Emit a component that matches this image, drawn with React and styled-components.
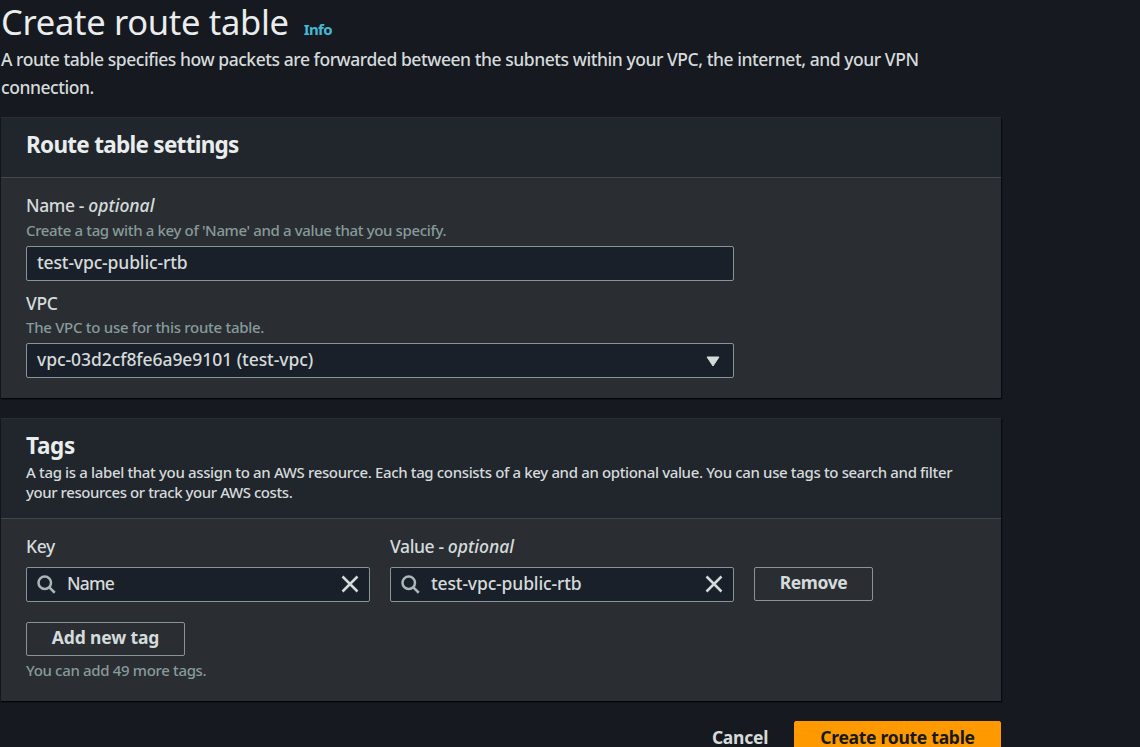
import React from "react";
import styled, { createGlobalStyle, ThemeProvider } from "styled-components";

const theme = {
  page: "#16191f",
  header: "#21252c",
  panel: "#2a2e33",
  field: "#1a2029",
  line: "#879596",
  divider: "#414750",
  text: "#d5dbdb",
  heading: "#eaeded",
  muted: "#879a9a",
  link: "#44b9d6",
  primary: "#ff9900",
};

const GlobalStyle = createGlobalStyle`
  * { box-sizing: border-box; }
  body {
    margin: 0;
    overflow: hidden;
    background: ${theme.page};
    color: ${theme.text};
    font-family: "Noto Sans", sans-serif;
    font-size: 17.5px;
    font-weight: 500;
  }
`;

const Page = styled.main`
  width: 1001px;
  padding-left: 1px;
  height: 747px;
`;

const TitleRow = styled.div`
  display: flex;
  align-items: flex-start;
  gap: 15px;
  height: 41px;
`;

const Title = styled.h1`
  margin: 0;
  color: ${({ theme }) => theme.heading};
  font-size: 34.5px;
  font-weight: 400;
  line-height: 43px;
  letter-spacing: -0.3px;
`;

const InfoLink = styled.a`
  margin-top: 19px;
  color: ${({ theme }) => theme.link};
  font-size: 15px;
  font-weight: 700;
  line-height: 20px;
  letter-spacing: -0.6px;
`;

const Description = styled.p`
  margin: 4px 0 16px;
  line-height: 28px;
  letter-spacing: -0.445px;
  white-space: nowrap;
`;

const Panel = styled.section`
  margin-bottom: 20px;
  border-top: 1px solid ${({ theme }) => theme.panel};
  background: ${({ theme }) => theme.panel};
  box-shadow: 0 1px 1px 0 #00070c, 1px 1px 1px 0 #0a0d12;
`;

const PanelHeader = styled.header`
  padding: 13px 25px ${({ $compact }) => ($compact ? "16px" : "18px")};
  background: ${({ theme }) => theme.header};
  border-bottom: 1px solid ${({ theme }) => theme.divider};
`;

const Heading = styled.h2`
  margin: 0;
  color: ${({ theme }) => theme.heading};
  font-size: 22.5px;
  font-weight: 700;
  line-height: 28px;
  letter-spacing: ${({ $spacing }) => $spacing || -0.72}px;
`;

const HeaderText = styled.p`
  margin: 2px 0 0;
  font-size: 15px;
  line-height: 20px;
  letter-spacing: -0.355px;
  white-space: nowrap;
`;

const HeaderTextEnd = styled.span`
  letter-spacing: -0.43px;
`;

const PanelBody = styled.div`
  padding: 15px 25px 20px;
`;

const FormFields = styled.div`
  display: flex;
  flex-direction: column;
  gap: 10px;
  width: 708px;
`;

const Field = styled.div`
  display: flex;
  flex-direction: column;
`;

const Label = styled.label`
  line-height: 24px;
  letter-spacing: -0.38px;

  em {
    letter-spacing: 0;
  }
`;

const Hint = styled.p`
  margin: ${({ $top }) => $top || 3}px 0 0;
  color: ${({ theme }) => theme.muted};
  font-size: 15px;
  line-height: 20px;
  letter-spacing: ${({ $spacing }) => $spacing || -0.36}px;
`;

const TagLimit = styled(Hint)`
  margin: 4px 0 1px;
`;

const Control = styled.div`
  display: flex;
  align-items: center;
  height: 35px;
  margin-top: ${({ $top }) => $top || 6}px;
  padding: 0 ${({ $search }) => ($search ? 9 : 10)}px;
  border: 1px solid ${({ theme }) => theme.line};
  border-radius: 2px;
  background: ${({ theme }) => theme.field};
`;

const ControlValue = styled.span`
  flex: 1;
  padding-bottom: 3px;
  line-height: 24px;
  letter-spacing: ${({ $spacing }) => $spacing || -0.14}px;
`;

const SearchValue = styled(ControlValue)`
  margin-left: 11px;
`;

const Icon = styled.svg`
  flex: none;
  display: block;
  width: 20px;
  height: 20px;
  margin-bottom: 1px;
`;

const TagGrid = styled.div`
  display: grid;
  grid-template-columns: 344px 344px 119px;
  gap: 20px;
  align-items: end;
  margin-bottom: 20px;
`;

const Button = styled.button`
  display: block;
  height: 34px;
  width: ${({ $width }) => $width}px;
  padding: 0 0 4px;
  border: 1px solid ${({ theme }) => theme.line};
  border-radius: 2px;
  background: transparent;
  color: ${({ theme }) => theme.text};
  font-family: inherit;
  font-size: 17.5px;
  font-weight: 700;
  line-height: 24px;
  letter-spacing: ${({ $spacing }) => $spacing || -0.27}px;
  white-space: nowrap;
`;

const RemoveButton = styled(Button)`
  margin-bottom: 1px;
`;

const PrimaryButton = styled(Button)`
  padding-bottom: 2px;
  border-color: ${({ theme }) => theme.primary};
  background: ${({ theme }) => theme.primary};
  color: ${({ theme }) => theme.page};
`;

const LinkButton = styled(Button)`
  padding-bottom: 2px;
  border-color: transparent;
`;

const Actions = styled.footer`
  display: flex;
  justify-content: flex-end;
`;

const SearchIcon = () => (
  <Icon viewBox="0 0 16 16" fill="none" stroke="#aab7b8" strokeWidth="2">
    <circle cx="7" cy="7" r="5" />
    <path d="m15 15-4.5-4.5" />
  </Icon>
);

const CloseIcon = () => (
  <Icon viewBox="0 0 16 16" fill="none" stroke="#d5dbdb" strokeWidth="2">
    <path d="m2 2 12 12M14 2 2 14" />
  </Icon>
);

const CaretIcon = () => (
  <Icon viewBox="0 0 20 20" fill="#d5dbdb" stroke="#d5dbdb" strokeLinejoin="round">
    <path d="M4 7h12l-6 9z" />
  </Icon>
);

const SearchField = ({ label, value, spacing }) => (
  <Field>
    <Label>{label}</Label>
    <Control $search $top={9}>
      <SearchIcon />
      <SearchValue $spacing={spacing}>{value}</SearchValue>
      <CloseIcon />
    </Control>
  </Field>
);

export default function App() {
  return (
    <ThemeProvider theme={theme}>
      <GlobalStyle />
      <Page>
        <TitleRow>
          <Title>Create route table</Title>
          <InfoLink>Info</InfoLink>
        </TitleRow>
        <Description>
          A route table specifies how packets are forwarded between the subnets within your VPC, the internet, and your VPN
          <br />
          connection.
        </Description>

        <Panel>
          <PanelHeader>
            <Heading>Route table settings</Heading>
          </PanelHeader>
          <PanelBody>
            <FormFields>
              <Field>
                <Label>
                  Name - <em>optional</em>
                </Label>
                <Hint>Create a tag with a key of 'Name' and a value that you specify.</Hint>
                <Control>
                  <ControlValue>test-vpc-public-rtb</ControlValue>
                </Control>
              </Field>
              <Field>
                <Label>VPC</Label>
                <Hint $top={2} $spacing={-0.29}>The VPC to use for this route table.</Hint>
                <Control>
                  <ControlValue $spacing={-0.06}>vpc-03d2cf8fe6a9e9101 (test-vpc)</ControlValue>
                  <CaretIcon />
                </Control>
              </Field>
            </FormFields>
          </PanelBody>
        </Panel>

        <Panel>
          <PanelHeader $compact>
            <Heading $spacing={-0.3}>Tags</Heading>
            <HeaderText>
              A tag is a label that you assign to an AWS resource. Each tag consists of a key and an optional value. You can use tags to search and filter
              <br />
              <HeaderTextEnd>your resources or track your AWS costs.</HeaderTextEnd>
            </HeaderText>
          </PanelHeader>
          <PanelBody>
            <TagGrid>
              <SearchField label="Key" value="Name" spacing={-0.8} />
              <SearchField
                label={
                  <>
                    Value - <em>optional</em>
                  </>
                }
                value="test-vpc-public-rtb"
              />
              <RemoveButton $width={119} $spacing={-0.4}>Remove</RemoveButton>
            </TagGrid>
            <Button $width={159} $spacing={-0.15}>Add new tag</Button>
            <TagLimit $spacing={-0.34}>You can add 49 more tags.</TagLimit>
          </PanelBody>
        </Panel>

        <Actions>
          <LinkButton $width={108}>Cancel</LinkButton>
          <PrimaryButton $width={207}>Create route table</PrimaryButton>
        </Actions>
      </Page>
    </ThemeProvider>
  );
}
